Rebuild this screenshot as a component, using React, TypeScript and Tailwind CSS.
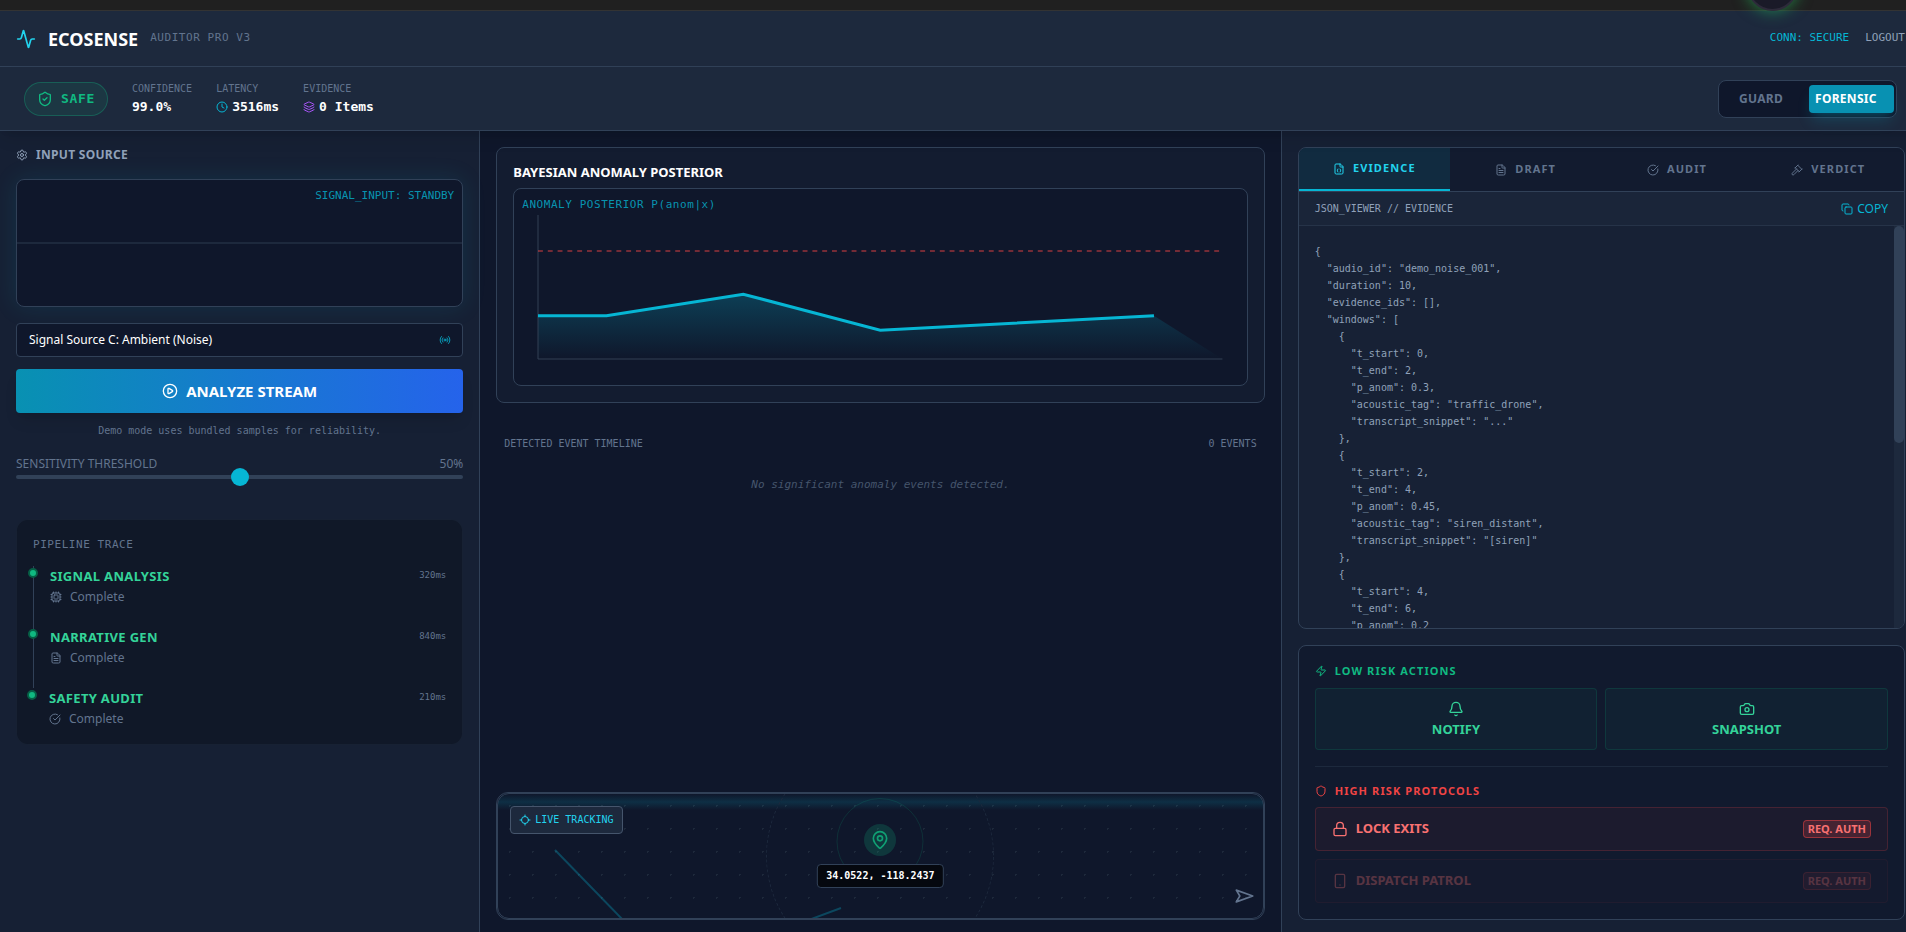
import { useState } from 'react';
import {
    Activity,
    Bell,
    Camera,
    CircleCheckBig,
    CirclePlay,
    Clock,
    Copy,
    Cpu,
    FileJson,
    FileText,
    Gavel,
    Layers,
    Locate,
    Lock,
    MapPin,
    Navigation,
    Radio,
    Settings,
    Shield,
    ShieldCheck,
    Smartphone,
    Zap,
} from 'lucide-react';

const mono = "font-['DejaVu_Sans_Mono',monospace]";

const steps = [
    { name: 'SIGNAL ANALYSIS', time: '320ms', icon: Cpu },
    { name: 'NARRATIVE GEN', time: '840ms', icon: FileText },
    { name: 'SAFETY AUDIT', time: '210ms', icon: CircleCheckBig },
];

const tabs = [
    { id: 'EVIDENCE', icon: FileJson },
    { id: 'DRAFT', icon: FileText },
    { id: 'AUDIT', icon: CircleCheckBig },
    { id: 'VERDICT', icon: Gavel },
];

const evidence = {
    audio_id: 'demo_noise_001',
    duration: 10,
    evidence_ids: [],
    windows: [
        { t_start: 0, t_end: 2, p_anom: 0.3, acoustic_tag: 'traffic_drone', transcript_snippet: '...' },
        { t_start: 2, t_end: 4, p_anom: 0.45, acoustic_tag: 'siren_distant', transcript_snippet: '[siren]' },
        { t_start: 4, t_end: 6, p_anom: 0.2 },
    ],
};

const VISIBLE_ROWS = 23;

function Header() {
    return (
        <header className="flex h-14 shrink-0 items-center justify-between border-b border-slate-700 bg-slate-800 px-4">
            <div className="flex items-center gap-3">
                <Activity size={20} className="text-[#22d3ee]" />
                <h1 className="text-lg leading-6 font-bold text-white">ECOSENSE</h1>
                <span className={`${mono} text-[11px] tracking-wider text-slate-500`}>AUDITOR PRO V3</span>
            </div>
            <div className={`${mono} flex items-center gap-4 text-[11px]`}>
                <span className="text-[#06b6d4]">CONN: SECURE</span>
                <button type="button" className="text-slate-400">LOGOUT</button>
            </div>
        </header>
    );
}

function StatusBar() {
    const [mode, setMode] = useState('FORENSIC');

    return (
        <div className={`${mono} relative z-10 flex h-16 shrink-0 items-center justify-between border-b border-slate-700 bg-slate-800 px-6 shadow-lg`}>
            <div className="flex items-center gap-6">
                <div className="flex h-[34px] items-center gap-2 rounded-full border border-[#10b981]/30 bg-[#10b981]/10 px-3 text-[#10b981]">
                    <ShieldCheck size={16} />
                    <span className="text-[13px] font-bold tracking-wider">SAFE</span>
                </div>
                <div>
                    <div className="text-[10px] leading-4 text-slate-500">CONFIDENCE</div>
                    <div className="text-[13px] leading-5 font-bold text-white">99.0%</div>
                </div>
                <div>
                    <div className="text-[10px] leading-4 text-slate-500">LATENCY</div>
                    <div className="flex items-center gap-1 text-[13px] leading-5 font-bold text-white">
                        <Clock size={12} className="text-[#06b6d4]" /> 3516ms
                    </div>
                </div>
                <div>
                    <div className="text-[10px] leading-4 text-slate-500">EVIDENCE</div>
                    <div className="flex items-center gap-1 text-[13px] leading-5 font-bold text-white">
                        <Layers size={12} className="text-[#a855f7]" /> 0 Items
                    </div>
                </div>
            </div>
            <div className="flex items-center gap-2.5 rounded-lg border border-slate-700 bg-slate-900 py-1 pr-0.5 pl-1 font-['Noto_Sans',sans-serif] text-xs font-bold tracking-wide">
                <button type="button" onClick={() => setMode('GUARD')} className="h-7 px-4 text-slate-500">
                    GUARD
                </button>
                <button
                    type="button"
                    aria-pressed={mode === 'FORENSIC'}
                    onClick={() => setMode('FORENSIC')}
                    className="h-7 w-[85px] rounded bg-[#0891b2] pl-1.5 text-left text-white shadow-lg shadow-[#06b6d4]/20"
                >
                    FORENSIC
                </button>
            </div>
        </div>
    );
}

function InputPanel() {
    const [threshold, setThreshold] = useState(50);

    return (
        <aside className="col-span-3 flex flex-col border-r border-slate-700 bg-slate-800/50 px-4 pt-3">
            <h2 className="flex h-6 items-center gap-2 text-xs font-bold tracking-wide text-slate-400">
                <Settings size={12} /> INPUT SOURCE
            </h2>

            <div className="relative mt-3 flex h-32 flex-col justify-center rounded-lg border border-slate-700 bg-slate-900 shadow-[0_0_24px_rgba(6,182,212,0.12)]">
                <div className="h-0.5 bg-slate-800" />
                <span className={`${mono} absolute top-2 right-2 text-[11px] leading-4 text-[#06b6d4]/80`}>
                    SIGNAL_INPUT: STANDBY
                </span>
            </div>

            <div className="relative mt-4">
                <select
                    aria-label="Signal source"
                    className="block h-[34px] w-full appearance-none rounded border border-slate-700 bg-slate-900 px-3 text-xs text-white"
                >
                    <option>Signal Source C: Ambient (Noise)</option>
                </select>
                <Radio size={12} className="pointer-events-none absolute top-[11px] right-3 text-[#06b6d4]/80" />
            </div>

            <button
                type="button"
                className="mt-3 flex h-11 items-center justify-center gap-2 rounded bg-[linear-gradient(to_right,#0891b2,#2563eb)] text-[15px] font-bold text-white shadow-lg"
            >
                <CirclePlay size={16} /> ANALYZE STREAM
            </button>
            <p className={`${mono} mt-2.5 text-center text-[10px] leading-4 text-slate-500`}>
                Demo mode uses bundled samples for reliability.
            </p>

            <div className="mt-4 text-xs text-slate-500">
                <label htmlFor="threshold" className="flex justify-between leading-[18px]">
                    <span>SENSITIVITY THRESHOLD</span>
                    <span>{threshold}%</span>
                </label>
                <input
                    id="threshold"
                    type="range"
                    value={threshold}
                    onChange={(e) => setThreshold(Number(e.target.value))}
                    className="mt-0.5 block h-1 w-full appearance-none rounded bg-slate-700 [&::-webkit-slider-thumb]:size-[18px] [&::-webkit-slider-thumb]:appearance-none [&::-webkit-slider-thumb]:rounded-full [&::-webkit-slider-thumb]:bg-[#06b6d4]"
                />
            </div>

            <div className="mt-10 rounded-xl border border-slate-800/50 bg-gray-900 p-4">
                <h3 className={`${mono} text-[11px] leading-[18px] tracking-wider text-slate-500`}>PIPELINE TRACE</h3>
                <ol className="mt-3">
                    {steps.map(({ name, time, icon: Icon }, i) => (
                        <li
                            key={name}
                            className={`relative pl-4 ${i < steps.length - 1 ? 'h-[61px] border-l border-slate-700' : ''}`}
                        >
                            <span className="absolute top-0.5 -left-1.5 size-2.5 rounded-full border-2 border-[#065f46] bg-[#10b981]" />
                            <div className="flex items-center justify-between">
                                <span className="text-[13px] leading-5 font-bold tracking-wide text-[#34d399]">{name}</span>
                                <span className={`${mono} text-[9px] text-slate-500`}>{time}</span>
                            </div>
                            <div className="mt-0.5 flex items-center gap-2 text-xs leading-[18px] text-slate-500">
                                <Icon size={12} /> Complete
                            </div>
                        </li>
                    ))}
                </ol>
            </div>
        </aside>
    );
}

function PosteriorChart() {
    return (
        <section className="rounded-lg border border-slate-700 bg-slate-800/30 p-4 pt-3">
            <h2 className="text-[13px] leading-6 font-bold text-white">BAYESIAN ANOMALY POSTERIOR</h2>
            <div className="mt-1 h-[198px] rounded-lg border border-slate-700 bg-slate-900 px-2 pt-2">
                <div className={`${mono} text-[11px] leading-4 tracking-wider text-[#06b6d4]/80`}>
                    ANOMALY POSTERIOR P(anom|x)
                </div>
                <div className="mx-4 mt-0.5">
                    <svg viewBox="0 0 100 100" preserveAspectRatio="none" className="block h-36 w-full overflow-visible">
                        <defs>
                            <linearGradient id="area" x1="0" y1="0" x2="0" y2="1">
                                <stop offset="0%" stopColor="#06b6d4" stopOpacity="0.25" />
                                <stop offset="100%" stopColor="#06b6d4" stopOpacity="0" />
                            </linearGradient>
                        </defs>
                        <g fill="none">
                            <polygon points="0,100 0,70 10,70 30,55 50,80 90,70 100,100" fill="url(#area)" />
                            <path d="M0 0V100H100" stroke="#334155" vectorEffect="non-scaling-stroke" />
                            <path d="M0 25H100" stroke="#ef4444" strokeOpacity="0.45" strokeWidth="2" strokeDasharray="4.9 4.9" vectorEffect="non-scaling-stroke" />
                            <path d="M0 70H10L30 55L50 80L90 70" stroke="#06b6d4" strokeWidth="3" vectorEffect="non-scaling-stroke" />
                        </g>
                    </svg>
                </div>
            </div>
        </section>
    );
}

function LiveMap() {
    return (
        <section className="h-32 rounded-xl border border-slate-700">
            <div className="relative h-full overflow-hidden rounded-xl border border-slate-700 bg-[radial-gradient(circle,#1e293b_1px,transparent_1px)] bg-size-[23px_23px]">
                <div className="absolute inset-x-0 top-0 h-4 bg-linear-to-b from-transparent via-[#06b6d4]/15 to-transparent" />
                <svg className="absolute inset-0 size-full" stroke="#06b6d4" strokeOpacity="0.3" strokeWidth="2">
                    <path d="M57 56L126 127" />
                    <path d="M308 127L343 114" />
                </svg>
                <div className="absolute top-1/2 left-1/2 size-[228px] -translate-1/2 rounded-full border border-dashed border-slate-800" />
                <div className="absolute top-1 left-1/2 size-[87px] -translate-x-1/2 rounded-full border border-[#10b981]/15" />
                <div className="absolute top-[30px] left-1/2 flex size-8 -translate-x-1/2 items-center justify-center rounded-full bg-[#10b981]/20">
                    <MapPin size={20} className="text-[#10b981]/80" />
                </div>
                <div className={`${mono} absolute top-[70px] left-1/2 -translate-x-1/2 rounded border border-slate-700 bg-[#05080f] px-2 text-[10px] leading-[22px] font-bold whitespace-nowrap text-white`}>
                    34.0522, -118.2437
                </div>
                <div className={`${mono} absolute top-3 left-3 flex items-center gap-1 rounded border border-slate-600 bg-slate-800 px-2 text-[10px] leading-[26px] text-[#22d3ee]`}>
                    <Locate size={12} /> LIVE TRACKING
                </div>
                <button type="button" aria-label="Recenter" className="absolute right-3 bottom-3 text-slate-500">
                    <Navigation size={20} className="rotate-45" />
                </button>
            </div>
        </section>
    );
}

function EvidencePanel() {
    const [active, setActive] = useState('EVIDENCE');
    const rows = JSON.stringify(evidence, null, 2).split('\n').slice(0, VISIBLE_ROWS);

    return (
        <section className="flex min-h-0 flex-1 flex-col overflow-hidden rounded-lg border border-slate-700 bg-slate-800/20">
            <div role="tablist" className="grid shrink-0 grid-cols-4 border-b border-slate-700 bg-slate-900/60">
                {tabs.map(({ id, icon: Icon }) => (
                    <button
                        key={id}
                        type="button"
                        role="tab"
                        aria-selected={active === id}
                        onClick={() => setActive(id)}
                        className={`flex h-[43px] items-center justify-center gap-2 text-[11px] font-bold tracking-widest ${
                            active === id ? 'border-b-2 border-[#06b6d4] bg-[#06b6d4]/10 text-[#22d3ee]' : 'text-slate-500'
                        }`}
                    >
                        <Icon size={12} /> {id}
                    </button>
                ))}
            </div>
            <div className="flex h-[34px] shrink-0 items-center justify-between border-b border-slate-700/50 bg-slate-800/50 px-4">
                <span className={`${mono} text-[10px] text-slate-400`}>JSON_VIEWER // {active}</span>
                <button type="button" className="flex items-center gap-1 text-xs text-[#06b6d4]">
                    <Copy size={12} /> COPY
                </button>
            </div>
            <div className="flex min-h-0 flex-1">
                <pre className={`${mono} flex-1 overflow-hidden px-4 pt-[17px] text-[10px] leading-[17px] text-slate-400`}>
                    {rows.join('\n')}
                </pre>
                <div className="w-2.5 bg-slate-800">
                    <div className="h-[217px] rounded-full bg-slate-700" />
                </div>
            </div>
        </section>
    );
}

function ActionsPanel() {
    return (
        <section className="rounded-lg border border-slate-700 bg-slate-900/60 p-4">
            <h2 className="flex items-center gap-2 text-[11px] leading-[18px] font-bold tracking-widest text-[#10b981]">
                <Zap size={12} /> LOW RISK ACTIONS
            </h2>
            <div className="mt-2 grid grid-cols-2 gap-2 text-[13px] leading-4 font-bold text-[#34d399]">
                <button type="button" className="flex h-[62px] flex-col items-center justify-center gap-1 rounded border border-[#10b981]/15 bg-[#10b981]/5">
                    <Bell size={16} /> NOTIFY
                </button>
                <button type="button" className="flex h-[62px] flex-col items-center justify-center gap-1 rounded border border-[#10b981]/15 bg-[#10b981]/5">
                    <Camera size={16} /> SNAPSHOT
                </button>
            </div>
            <hr className="my-4 border-slate-800" />
            <h2 className="flex items-center gap-2 text-[11px] leading-4 font-bold tracking-widest text-[#ef4444]">
                <Shield size={12} /> HIGH RISK PROTOCOLS
            </h2>
            <div className="mt-2 flex flex-col gap-2 text-[13px] font-bold text-[#f87171]">
                <button type="button" className="flex h-11 items-center gap-2 rounded border border-[#ef4444]/20 bg-[#ef4444]/5 px-4">
                    <Lock size={16} /> LOCK EXITS
                    <span className="ml-auto rounded border border-[#ef4444]/50 bg-[#ef4444]/20 px-1 text-[11px] leading-4">REQ. AUTH</span>
                </button>
                <button type="button" disabled className="flex h-11 items-center gap-2 rounded border border-[#ef4444]/20 bg-[#ef4444]/5 px-4 opacity-30">
                    <Smartphone size={16} /> DISPATCH PATROL
                    <span className="ml-auto rounded border border-[#ef4444]/50 bg-[#ef4444]/20 px-1 text-[11px] leading-4">REQ. AUTH</span>
                </button>
            </div>
        </section>
    );
}

export default function App() {
    return (
        <div className="relative h-screen overflow-hidden bg-slate-900 font-['Noto_Sans',sans-serif]">
            {/* a little wider than the window, so the right gutter runs off the edge */}
            <div className="-mr-[15px] flex h-full flex-col">
                <div className="h-[11px] shrink-0 border-b border-[#333] bg-[#202020]" />
                <Header />
                <StatusBar />
                <main className="grid min-h-0 flex-1 grid-cols-12">
                    <InputPanel />
                    <div className="col-span-5 flex flex-col px-4 pt-4 pb-3">
                        <PosteriorChart />
                        <div className={`${mono} mt-8 flex justify-between px-2 text-[10px] leading-[18px] text-slate-500`}>
                            <h2>DETECTED EVENT TIMELINE</h2>
                            <span>0 EVENTS</span>
                        </div>
                        <p className={`${mono} mt-6 flex-1 text-center text-[11px] leading-4 text-slate-600 italic`}>
                            No significant anomaly events detected.
                        </p>
                        <LiveMap />
                    </div>
                    <div className="col-span-4 flex min-h-0 flex-col gap-4 border-l border-slate-700 bg-slate-800/50 px-4 pt-4 pb-3">
                        <EvidencePanel />
                        <ActionsPanel />
                    </div>
                </main>
            </div>
            <div className="absolute -top-10 right-[108px] z-20 size-[51px] rounded-full border-2 border-[#2d2a3a] bg-[#1a1a28] shadow-[0_0_16px_rgba(34,197,94,0.6)]" />
        </div>
    );
}
